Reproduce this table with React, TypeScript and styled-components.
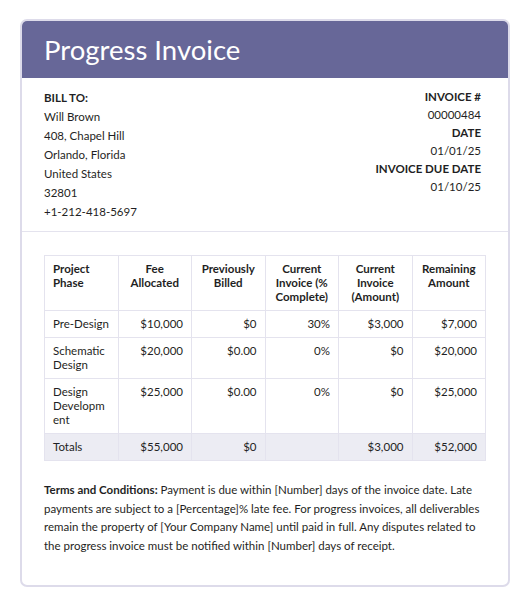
import React from "react";
import styled, { createGlobalStyle } from "styled-components";

const GlobalStyle = createGlobalStyle`
  body {
    margin: 0;
    background: #ffffff;
    font-family: Lato, "Open Sans", sans-serif;
    color: #1f1f24;
  }
`;

type Row = {
  phase: string;
  fee: string;
  billed: string;
  percent: string;
  amount: string;
  remaining: string;
};

const rows: Row[] = [
  { phase: "Pre-Design", fee: "$10,000", billed: "$0", percent: "30%", amount: "$3,000", remaining: "$7,000" },
  { phase: "Schematic Design", fee: "$20,000", billed: "$0.00", percent: "0%", amount: "$0", remaining: "$20,000" },
  { phase: "Design Development", fee: "$25,000", billed: "$0.00", percent: "0%", amount: "$0", remaining: "$25,000" },
];

const columns = [
  "Project Phase",
  "Fee Allocated",
  "Previously Billed",
  "Current Invoice (% Complete)",
  "Current Invoice (Amount)",
  "Remaining Amount",
];

export default function App() {
  return (
    <>
      <GlobalStyle />
      <Page>
        <Card>
          <Header>
            <Title>Progress Invoice</Title>
          </Header>

          <Info>
            <BillTo>
              <Label>BILL TO:</Label>
              <Line>Will Brown</Line>
              <Line>408, Chapel Hill</Line>
              <Line>Orlando, Florida</Line>
              <Line>United States</Line>
              <Line>32801</Line>
              <Line>+1-212-418-5697</Line>
            </BillTo>
            <Meta>
              <Label>INVOICE #</Label>
              <Line>00000484</Line>
              <Label>DATE</Label>
              <Line>01/01/25</Line>
              <Label>INVOICE DUE DATE</Label>
              <Line>01/10/25</Line>
            </Meta>
          </Info>

          <Body>
            <Table>
              <colgroup>
                {columns.map((c) => (
                  <col key={c} style={{ width: `${100 / columns.length}%` }} />
                ))}
              </colgroup>
              <thead>
                <tr>
                  {columns.map((c, i) => (
                    <Th key={c} $left={i === 0}>
                      {c}
                    </Th>
                  ))}
                </tr>
              </thead>
              <tbody>
                {rows.map((r) => (
                  <tr key={r.phase}>
                    <Td $left>{r.phase}</Td>
                    <Td>{r.fee}</Td>
                    <Td>{r.billed}</Td>
                    <Td>{r.percent}</Td>
                    <Td>{r.amount}</Td>
                    <Td>{r.remaining}</Td>
                  </tr>
                ))}
                <TotalRow>
                  <Td $left>Totals</Td>
                  <Td>$55,000</Td>
                  <Td>$0</Td>
                  <Td></Td>
                  <Td>$3,000</Td>
                  <Td>$52,000</Td>
                </TotalRow>
              </tbody>
            </Table>

            <Terms>
              <strong>Terms and Conditions:</strong> Payment is due within [Number] days of
              the invoice date. Late payments are subject to a [Percentage]% late fee. For
              progress invoices, all deliverables remain the property of [Your Company Name]
              until paid in full. Any disputes related to the progress invoice must be
              notified within [Number] days of receipt.
            </Terms>
          </Body>
        </Card>
      </Page>
    </>
  );
}

const Page = styled.div`
  padding: 19px 20px;
`;

const Card = styled.div`
  border: 2px solid #dddbea;
  border-radius: 7px;
  overflow: hidden;
  background: #ffffff;
`;

const Header = styled.div`
  background: #676798;
  height: 57px;
  display: flex;
  align-items: center;
  padding: 0 22px;
`;

const Title = styled.h1`
  margin: 0;
  color: #ffffff;
  font-size: 27.5px;
  font-weight: 400;
`;

const Info = styled.div`
  display: flex;
  justify-content: space-between;
  padding: 10px 27px 10px 22px;
  border-bottom: 1px solid #e4e3ee;
  font-size: 11.5px;
`;

const BillTo = styled.div`
  display: flex;
  flex-direction: column;
  line-height: 19px;
`;

const Meta = styled.div`
  display: flex;
  flex-direction: column;
  align-items: flex-end;
  line-height: 18px;
`;

const Label = styled.div`
  font-weight: 700;
`;

const Line = styled.div`
  font-weight: 400;
`;

const Body = styled.div`
  padding: 23px 22px 29px;
  display: flex;
  flex-direction: column;
  gap: 20px;
`;

const Table = styled.table`
  width: 100%;
  border-collapse: collapse;
  table-layout: fixed;
  font-size: 11.5px;
  line-height: 14px;
`;

const Th = styled.th<{ $left?: boolean }>`
  border: 1px solid #e4e3ee;
  padding: 6px 8px;
  font-weight: 700;
  vertical-align: top;
  text-align: ${(p) => (p.$left ? "left" : "center")};
`;

const Td = styled.td<{ $left?: boolean }>`
  border: 1px solid #e4e3ee;
  padding: 6px 8px 6px 8px;
  vertical-align: top;
  text-align: ${(p) => (p.$left ? "left" : "right")};
  overflow-wrap: anywhere;
`;

const TotalRow = styled.tr`
  background: #ececf3;
`;

const Terms = styled.p`
  margin: 0;
  font-size: 11.5px;
  line-height: 18.7px;

  strong {
    font-weight: 700;
  }
`;
